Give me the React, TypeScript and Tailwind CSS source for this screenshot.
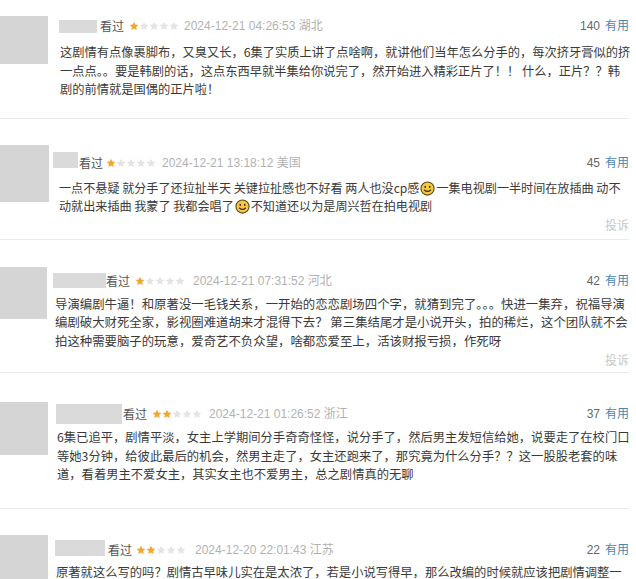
import React from 'react';

const Star = ({ on }: { on: boolean }) => (
    <svg width="10" height="10" viewBox="0 0 24 24" className="block">
        <path
          d="M12 1.5l3.1 7.1 7.6.7-5.8 5 1.8 7.5L12 17.8l-6.7 4 1.8-7.5-5.8-5 7.6-.7z"
          fill={ on ? '#f4a62a' : '#e4e4e4' }
        />
    </svg>
);

const Smile = () => (
    <svg width="15" height="15" viewBox="0 0 16 16" className="inline-block align-[-3px] mx-[1px]">
        <circle cx="8" cy="8" r="7" fill="#f6c744" stroke="#5c4a1e" strokeWidth="1.2"/>
        <ellipse cx="5.6" cy="6.3" rx="0.9" ry="1.2" fill="#3b2f12"/>
        <ellipse cx="10.4" cy="6.3" rx="0.9" ry="1.2" fill="#3b2f12"/>
        <path d="M4.6 9.6 Q8 12.6 11.4 9.6" fill="none" stroke="#3b2f12" strokeWidth="1.1" strokeLinecap="round"/>
    </svg>
);

type Review = {
    section: string;
    avatar: string;
    content: string;
    nameBox: string;
    seen: string;
    starsGap: string;
    dateGap: string;
    stars: number;
    date: string;
    votes: number;
    body: string;
    lines: React.ReactNode[];
    report?: string;
};

const reviews: Review[] = [
    {
        section: 'pt-[16px] pb-[19px]',
        avatar: 'w-12 h-12',
        content: 'ml-[11px] pt-[2px]',
        nameBox: 'w-[38px] h-[13px]',
        seen: 'ml-[3px]',
        starsGap: 'ml-[5px]',
        dateGap: 'ml-[5px]',
        stars: 1,
        date: '2024-12-21 04:26:53 湖北',
        votes: 140,
        body: 'mt-[9px] pl-[1px] text-[12.25px]',
        lines: [
            '这剧情有点像裹脚布，又臭又长，6集了实质上讲了点啥啊，就讲他们当年怎么分手的，每次挤牙膏似的挤',
            '一点点。。要是韩剧的话，这点东西早就半集给你说完了，然开始进入精彩正片了！！ 什么，正片？？韩',
            '剧的前情就是国偶的正片啦！',
        ],
    },
    {
        section: 'pt-[26px] pb-[6px]',
        avatar: 'w-[49px] h-[57px]',
        content: 'ml-[4px] pt-[10px]',
        nameBox: 'w-[25px] h-4 -mt-[6px]',
        seen: 'ml-[1px]',
        starsGap: 'ml-[3px]',
        dateGap: 'ml-[6px]',
        stars: 1,
        date: '2024-12-21 13:18:12 美国',
        votes: 45,
        body: 'mt-[8px] pl-[6px] text-[12.1px] leading-[17.5px]',
        lines: [
            <>一点不悬疑 就分手了还拉扯半天 关键拉扯感也不好看 两人也没cp感<Smile/>一集电视剧一半时间在放插曲 动不</>,
            <>动就出来插曲 我蒙了 我都会唱了<Smile/>不知道还以为是周兴哲在拍电视剧</>,
        ],
        report: 'mt-[1px]',
    },
    {
        section: 'pt-[27px] pb-[4px]',
        avatar: 'w-[47px] h-[52px]',
        content: 'ml-[6px] pt-[6px]',
        nameBox: 'w-[53px] h-[15px]',
        seen: 'ml-0',
        starsGap: 'ml-[5px]',
        dateGap: 'ml-[8px]',
        stars: 1,
        date: '2024-12-21 07:31:52 河北',
        votes: 42,
        body: 'mt-[6px] pl-[2px] text-[12.4px]',
        lines: [
            '导演编剧牛逼！和原著没一毛钱关系，一开始的恋恋剧场四个字，就猜到完了。。。快进一集弃，祝福导演',
            '编剧破大财死全家，影视圈难道胡来才混得下去？ 第三集结尾才是小说开头，拍的稀烂，这个团队就不会',
            '拍这种需要脑子的玩意，爱奇艺不负众望，啥都恋爱至上，活该财报亏损，作死呀',
        ],
        report: 'mt-[2px]',
    },
    {
        section: 'pt-[29px] pb-[24px]',
        avatar: 'w-12 h-[53px]',
        content: 'ml-[8px] pt-[4px]',
        nameBox: 'w-[66px] h-5',
        seen: 'ml-[1px]',
        starsGap: 'ml-[5px]',
        dateGap: 'ml-[7px]',
        stars: 2,
        date: '2024-12-21 01:26:52 浙江',
        votes: 37,
        body: 'mt-[6px] pl-[1px] text-[12.3px]',
        lines: [
            '6集已追平，剧情平淡，女主上学期间分手奇奇怪怪，说分手了，然后男主发短信给她，说要走了在校门口',
            '等她3分钟，给彼此最后的机会，然男主走了，女主还跑来了，那究竟为什么分手？？这一股股老套的味',
            '道，看着男主不爱女主，其实女主也不爱男主，总之剧情真的无聊',
        ],
    },
    {
        section: 'pt-[26px]',
        avatar: 'w-12 h-[60px]',
        content: 'ml-[7px] pt-[7px]',
        nameBox: 'w-[50px] h-4 -mt-[4px]',
        seen: 'ml-[3px]',
        starsGap: 'ml-[4px]',
        dateGap: 'ml-[9px]',
        stars: 2,
        date: '2024-12-20 22:01:43 江苏',
        votes: 22,
        body: 'mt-[5px] pl-[1px] text-[12.3px]',
        lines: [
            '原著就这么写的吗？剧情古早味儿实在是太浓了，若是小说写得早，那么改编的时候就应该把剧情调整一',
        ],
    },
];

const ReviewItem = ({ r, last }: { r: Review; last: boolean }) => (
    <section className={ `flex ${r.section} ${last ? '' : 'border-b border-[#ececec]'}` }>
        <div className={ `shrink-0 bg-[#d5d5d5] ${r.avatar}` }/>
        <div className={ `flex-1 min-w-0 ${r.content}` }>
            <div className="flex h-4 items-center text-[12px] font-['Liberation_Sans','Noto_Sans_CJK_SC',sans-serif]">
                <div className={ `shrink-0 bg-[#dadada] ${r.nameBox}` }/>
                <span className={ `text-[#555] font-['Noto_Sans_CJK_SC',sans-serif] ${r.seen}` }>看过</span>
                <span className={ `flex ${r.starsGap}` }>
                    { [0, 1, 2, 3, 4].map(i => <Star key={ i } on={ i < r.stars }/>) }
                </span>
                <span className={ `text-[#b2b2b2] whitespace-nowrap ${r.dateGap}` }>{ r.date }</span>
                <span className="ml-auto whitespace-nowrap">
                    <span className="text-[#666]">{ r.votes }</span>
                    <span className="ml-[5px] text-[#4a86b4]">有用</span>
                </span>
            </div>
            <div className={ `text-[#3a3a3a] leading-[18.5px] font-['Noto_Sans_CJK_SC',sans-serif] ${r.body}` }>
                { r.lines.map((l, i) => (
                    <div key={ i } className="whitespace-nowrap">{ l }</div>
                )) }
            </div>
            { r.report && (
                <div className={ `flex h-4 items-center justify-end text-[12px] text-[#c8c8c8] font-['Noto_Sans_CJK_SC',sans-serif] ${r.report}` }>
                    投诉
                </div>
            ) }
        </div>
    </section>
);

export default function App() {
    return (
        <main className="h-[579px] w-[636px] bg-white overflow-hidden">
            <div className="w-[629px]">
                { reviews.map((r, i) => (
                    <ReviewItem key={ i } r={ r } last={ i === reviews.length - 1 }/>
                )) }
            </div>
        </main>
    );
}
